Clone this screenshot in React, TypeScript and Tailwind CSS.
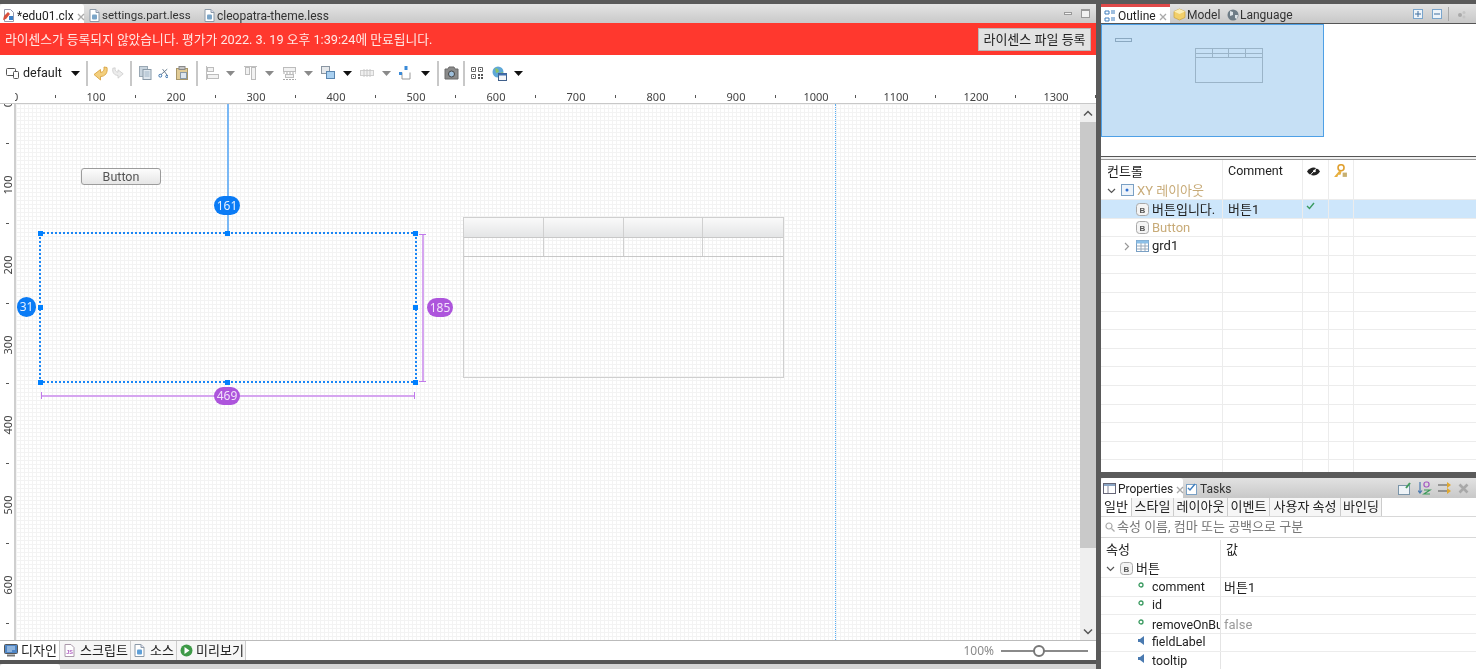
import React from "react";

const Caret = ({ dark = false }: { dark?: boolean }) => (
  <svg width="9" height="5" viewBox="0 0 9 5" className="shrink-0">
    <path d="M0 0h9L4.500 5z" fill={dark ? "#111" : "#8a8a8a"} />
  </svg>
);

const Sep = () => <div className="h-[25px] w-[2px] shrink-0 bg-[#c8c8c8]" />;

const Tb = ({ w, children }: { w: number; children?: React.ReactNode }) => (
  <div className="flex h-[20px] shrink-0 items-center justify-center" style={{ width: w }}>
    {children}
  </div>
);

const FileIcon = ({ c = "#7aa5c8" }: { c?: string }) => (
  <svg width="11" height="13" viewBox="0 0 11 13" className="shrink-0">
    <path d="M1 .5h6l3 3v9H1z" fill="#fff" stroke="#8c9aa8" />
    <path d="M7 .5v3h3" fill="#dde" stroke="#8c9aa8" />
    <rect x="3" y="5.500" width="5" height="5" fill={c} rx="1" />
  </svg>
);

const BIcon = () => (
  <svg width="13" height="13" viewBox="0 0 13 13" className="shrink-0">
    <rect x=".5" y=".5" width="12" height="12" rx="3" fill="#f4f4f4" stroke="#a8a8a8" />
    <text x="6.500" y="9.500" textAnchor="middle" fontSize="8" fontWeight="700" fill="#555" fontFamily="Liberation Sans">B</text>
  </svg>
);

const Close = () => (
  <svg width="8" height="8" viewBox="0 0 8 8" className="shrink-0">
    <path d="M1 1l6 6M7 1L1 7" stroke="#a9a9a9" strokeWidth="1.300" />
  </svg>
);

const Chevron = ({ right = false }: { right?: boolean }) => (
  <svg width="9" height="9" viewBox="0 0 9 9" className="shrink-0">
    <path d={right ? "M3 1l3.500 3.500L3 8" : "M1 3l3.500 3.500L8 3"} fill="none" stroke={right ? "#999" : "#555"} strokeWidth="1.200" />
  </svg>
);

const Handle = ({ x, y }: { x: number; y: number }) => (
  <div className="absolute h-[5px] w-[5px] bg-[#0080ff]" style={{ left: x - 2, top: y - 2 }} />
);

const Toolbar = () => (
  <div className="flex h-[33px] shrink-0 items-center bg-white pl-[6px] pt-[3px] text-[12px] text-[#222]">
    <Tb w={13}>
      <svg width="13" height="12" viewBox="0 0 13 12">
        <rect x=".5" y="1.500" width="9" height="7" rx="1" fill="none" stroke="#555" />
        <rect x="7.500" y="4.500" width="5" height="7" rx="1" fill="#fff" stroke="#555" />
      </svg>
    </Tb>
    <span className="ml-[4px] mt-[1px] w-[48px] text-[12.5px]">default</span>
    <Caret dark />
    <div className="w-[6px]" />
    <Sep />
    <Tb w={24}>
      <svg width="15" height="15" viewBox="0 0 15 15">
        <path d="M14 1.500L11 1c.5 3-.5 5-3.500 5.500V3.500L1 8.500l6.500 5.500v-3.500C12 10.500 15 7 14 1.500z" fill="#f3cf7e" stroke="#d9a440" strokeWidth=".9" strokeLinejoin="round" />
      </svg>
    </Tb>
    <Tb w={12}>
      <svg width="14" height="14" viewBox="0 0 15 15">
        <path d="M1 1.500L4 1c-.5 3 .5 5 3.500 5.500V3.500L14 8.500 7.500 14v-3.500C3 10.500 0 7 1 1.500z" fill="#ececec" stroke="#c8c8c8" strokeWidth=".9" strokeLinejoin="round" />
      </svg>
    </Tb>
    <div className="w-[6px]" />
    <Sep />
    <Tb w={26}>
      <svg width="13" height="14" viewBox="0 0 13 14">
        <rect x=".5" y=".5" width="8" height="10" fill="#c8d4de" stroke="#9aa8b4" />
        <rect x="4" y="3.500" width="8" height="10" fill="#dfe7ee" stroke="#8a9aa8" />
        <path d="M5.500 6h5M5.500 8h5M5.500 10h5" stroke="#9fb4c6" />
      </svg>
    </Tb>
    <Tb w={10}>
      <svg width="13" height="14" viewBox="0 0 13 14">
        <path d="M12 2L4 9M6 2l6 8" stroke="#5f7488" strokeWidth="1.200" />
        <circle cx="3" cy="10.500" r="1.900" fill="none" stroke="#2f6aa8" strokeWidth="1.200" />
        <circle cx="11.500" cy="11.500" r="1.500" fill="none" stroke="#2f6aa8" strokeWidth="1.200" />
      </svg>
    </Tb>
    <Tb w={28}>
      <svg width="12" height="14" viewBox="0 0 12 14">
        <rect x=".5" y="2.500" width="11" height="11" fill="#e2cc96" stroke="#a8976a" />
        <rect x="3" y=".5" width="6" height="3" fill="#c4c4c4" stroke="#8a8a8a" />
        <rect x="4.500" y="6.500" width="6" height="6" fill="#dde6ee" stroke="#8a9aa8" />
      </svg>
    </Tb>
    <Sep />
    <Tb w={28}>
      <svg width="13" height="14" viewBox="0 0 13 14">
        <path d="M.5 0v14" stroke="#c0c0c0" />
        <rect x="1.500" y="1.500" width="6" height="4" fill="#f2f2f2" stroke="#bcbcbc" />
        <rect x="1.500" y="8.500" width="11" height="4" fill="#f2f2f2" stroke="#bcbcbc" />
      </svg>
    </Tb>
    <Caret />
    <Tb w={30}>
      <svg width="13" height="14" viewBox="0 0 13 14">
        <path d="M0 .5h13" stroke="#c0c0c0" />
        <rect x="1.500" y="1.500" width="4" height="7" fill="#f2f2f2" stroke="#bcbcbc" />
        <rect x="7.500" y="1.500" width="4" height="12" fill="#f2f2f2" stroke="#bcbcbc" />
      </svg>
    </Tb>
    <Caret />
    <Tb w={30}>
      <svg width="13" height="14" viewBox="0 0 13 14">
        <rect x=".5" y="1.500" width="12" height="4" fill="#f2f2f2" stroke="#bcbcbc" />
        <rect x="2.500" y="8.500" width="8" height="3" fill="#f2f2f2" stroke="#bcbcbc" />
        <path d="M0 7h13M0 13.500h13" stroke="#a8a8a8" strokeDasharray="2 1" />
      </svg>
    </Tb>
    <Caret />
    <Tb w={30}>
      <svg width="14" height="14" viewBox="0 0 14 14">
        <rect x=".5" y=".5" width="8" height="7" fill="#e6e9ec" stroke="#8a96a2" />
        <rect x="5.500" y="5.500" width="8" height="7" fill="#a9d0f0" stroke="#5a86b0" />
      </svg>
    </Tb>
    <Caret dark />
    <Tb w={30}>
      <svg width="14" height="10" viewBox="0 0 14 10">
        <rect x=".5" y="2.500" width="13" height="5" fill="#f0f0f0" stroke="#cfcfcf" />
        <path d="M4 1v8M7 1v8M10 1v8" stroke="#c8c8c8" />
      </svg>
    </Tb>
    <Caret />
    <Tb w={30}>
      <svg width="14" height="14" viewBox="0 0 14 14">
        <rect x="5.500" y="0" width="3" height="4" fill="#3a8ad8" />
        <path d="M3 6.500v6.500h8V6.500" fill="none" stroke="#9a9a9a" />
        <rect x="0" y="6" width="3" height="3" fill="#3a8ad8" />
      </svg>
    </Tb>
    <Caret dark />
    <div className="w-[7px]" />
    <Sep />
    <Tb w={24}>
      <svg width="15" height="14" viewBox="0 0 15 14">
        <path d="M1 3h3l1-2h5l1 2h3v10H1z" fill="#8a8a8a" stroke="#6a6a6a" />
        <circle cx="7.500" cy="8" r="3" fill="#9fc0dc" stroke="#444" />
      </svg>
    </Tb>
    <Sep />
    <Tb w={24}>
      <svg width="12" height="12" viewBox="0 0 12 12">
        <path d="M.5.5h4v4h-4zM7.500.5h4v4h-4zM.5 7.500h4v4h-4z" fill="none" stroke="#666" />
        <path d="M2 2h1v1H2zM9 2h1v1H9zM2 9h1v1H2zM7 7h2v2H7zM10 7h2v2h-2zM7 10h2v2H7zM10 10h2v2h-2z" fill="#555" />
      </svg>
    </Tb>
    <Tb w={20}>
      <svg width="15" height="15" viewBox="0 0 15 15">
        <circle cx="6" cy="6" r="5.500" fill="#5fa8d8" />
        <path d="M3 2l3 1 1 3-3 1zM8 7l3-1 0 3z" fill="#8cc26a" />
        <rect x="6.500" y="7.500" width="8" height="7" fill="#f4f6f8" stroke="#3f5f8a" />
        <rect x="6.500" y="7.500" width="8" height="2" fill="#3f6fb0" />
      </svg>
    </Tb>
    <div className="w-[5px]" />
    <Caret dark />
  </div>
);

const HRuler = () => (
  <div className="relative h-[16px] shrink-0 overflow-hidden border-b border-[#c8c8c8] bg-white font-['Noto_Sans',sans-serif] text-[11px] leading-[15px] text-[#444]">
    <div className="absolute left-[15px] top-[1px] h-[15px] w-[4px] overflow-hidden">
      <span className="absolute left-[-3px]">0</span>
    </div>
    {[100, 200, 300, 400, 500, 600, 700, 800, 900, 1000, 1100, 1200, 1300].map((v, i) => (
      <span key={v} className="absolute top-[1px] w-[40px] text-center" style={{ left: 76 + i * 80 }}>
        {v}
      </span>
    ))}
    {Array.from({ length: 14 }).map((_, i) => (
      <div key={i} className="absolute top-[7px] h-[3px] w-[1px] bg-[#555]" style={{ left: 55 + i * 80 }} />
    ))}
  </div>
);

const VRuler = () => (
  <div className="relative w-[16px] shrink-0 overflow-hidden border-r-[2px] border-[#cfcfcf] bg-white font-['Noto_Sans',sans-serif] text-[11px] text-[#444]">
    {[0, 100, 200, 300, 400, 500, 600].map((v, i) => (
      <span
        key={v}
        className="absolute left-[-12px] w-[40px] -rotate-90 text-center leading-[14px]"
        style={{ top: i === 0 ? -7 : i * 80 - 6 }}
      >
        {v}
      </span>
    ))}
    {Array.from({ length: 7 }).map((_, i) => (
      <div key={i} className="absolute left-[6px] h-[1px] w-[3px] bg-[#555]" style={{ top: 39 + i * 80 }} />
    ))}
  </div>
);

const Badge = "font-['Noto_Sans',sans-serif]";

const Canvas = () => (
  <div className="relative flex-1 overflow-hidden bg-white bg-[linear-gradient(#f3f3f3_1px,transparent_1px),linear-gradient(90deg,#f3f3f3_1px,transparent_1px)] bg-[size:4px_4px] text-[#444]">
    {/* origin of this box is x=16, y=104 */}
    <div className="absolute left-[65px] top-[64px] flex h-[17px] w-[80px] items-center justify-center rounded-[3px] border border-[#9c9c9c] bg-[linear-gradient(#fcfcfc,#e6e6e6)] pt-[1px] text-[12.5px] text-[#555]">
      Button
    </div>

    <div className="absolute left-[211px] top-0 h-[129px] w-[2px] bg-[#7ab8f5]" />
    <div className={`${Badge} absolute left-[198px] top-[92px] flex h-[19px] w-[26px] items-center justify-center rounded-full bg-[#0a7bf5] text-[12px] text-[#e6f0ff]`}>161</div>

    <div className="absolute left-[23px] top-[128px] h-[151px] w-[378px] border-2 border-dotted border-[#1a86f5]" />
    <Handle x={24} y={129} />
    <Handle x={211} y={129} />
    <Handle x={399} y={203} />
    <Handle x={24} y={203} />
    <Handle x={399} y={129} />
    <Handle x={24} y={278} />
    <Handle x={211} y={278} />
    <Handle x={399} y={278} />

    <div className={`${Badge} absolute left-[1px] top-[193px] flex h-[20px] w-[19px] items-center justify-center rounded-full bg-[#0a7bf5] text-[12px] text-[#e6f0ff]`}>31</div>

    <div className="absolute left-[406px] top-[131px] h-[147px] w-[2px] bg-[#d6a6f0]" />
    <div className="absolute left-[403px] top-[130px] h-[1px] w-[7px] bg-[#c07aea]" />
    <div className="absolute left-[403px] top-[277px] h-[1px] w-[7px] bg-[#c07aea]" />
    <div className={`${Badge} absolute left-[411px] top-[194px] flex h-[19px] w-[26px] items-center justify-center rounded-full bg-[#ad55dc] text-[12px] text-[#f2e2fa]`}>185</div>

    <div className="absolute left-[25px] top-[291px] h-[2px] w-[374px] bg-[#d6a6f0]" />
    <div className="absolute left-[25px] top-[288px] h-[7px] w-[1px] bg-[#c07aea]" />
    <div className="absolute left-[398px] top-[288px] h-[7px] w-[1px] bg-[#c07aea]" />
    <div className={`${Badge} absolute left-[198px] top-[283px] flex h-[18px] w-[26px] items-center justify-center rounded-full bg-[#ad55dc] text-[12px] text-[#f2e2fa]`}>469</div>

    <div className="absolute left-[447px] top-[113px] flex h-[161px] w-[321px] flex-col border border-[#cfcfcf]">
      <div className="grid h-[20px] grid-cols-4 border-b border-[#c8c8c8] bg-[linear-gradient(#fafafa,#e4e5e6)]">
        <div className="border-r border-[#d0d0d0]" />
        <div className="border-r border-[#d0d0d0]" />
        <div className="border-r border-[#d0d0d0]" />
        <div />
      </div>
      <div className="grid h-[19px] grid-cols-4 border-b border-[#c8c8c8]">
        <div className="border-r border-[#d0d0d0]" />
        <div className="border-r border-[#d0d0d0]" />
        <div className="border-r border-[#d0d0d0]" />
        <div />
      </div>
    </div>

    <div className="absolute left-[819px] top-0 h-full w-0 border-l border-dotted border-[#5aaef5]" />
  </div>
);

const Scrollbar = () => (
  <div className="flex w-[16px] shrink-0 flex-col items-center bg-[#efefef]">
    <div className="flex h-[18px] items-center">
      <svg width="10" height="7" viewBox="0 0 10 7"><path d="M1 5.500l4-4 4 4" fill="none" stroke="#555" strokeWidth="1.500" /></svg>
    </div>
    <div className="h-[426px] w-full bg-[#c9c9c9]" />
    <div className="flex-1" />
    <div className="flex h-[18px] items-center">
      <svg width="10" height="7" viewBox="0 0 10 7"><path d="M1 1.500l4 4 4-4" fill="none" stroke="#555" strokeWidth="1.500" /></svg>
    </div>
  </div>
);

const Editor = () => (
  <div className="flex w-[1096px] shrink-0 flex-col">
    <div className="flex h-[19px] shrink-0 items-end bg-[linear-gradient(#e4e4e4,#c9c9c9)] text-[12px] text-[#333]">
      <div className="flex h-[19px] w-[84px] items-center gap-[2px] rounded-t-[3px] bg-white pl-[3px] pt-[4px]">
        <svg width="12" height="13" viewBox="0 0 12 13" className="shrink-0">
          <path d="M1.500.5h6l3 3v9h-9z" fill="#fff" stroke="#99a" />
          <path d="M1 7l4-4 2 2-4 5-3 1z" fill="#d8503c" />
          <rect x="6" y="7" width="4" height="4" fill="#3a7fc8" />
        </svg>
        <span className="text-[#222]">*edu01.clx</span>
        <div className="ml-[1px] mt-[3px]"><Close /></div>
      </div>
      <div className="flex h-[19px] w-[120px] items-center gap-[2px] pl-[5px] pt-[4px]">
        <FileIcon />
        <span className="text-[11.5px]">settings.part.less</span>
      </div>
      <div className="flex h-[19px] items-center gap-[2px] pt-[4px]">
        <FileIcon />
        <span>cleopatra-theme.less</span>
      </div>
      <div className="flex-1" />
      <div className="flex h-[19px] items-center gap-[9px] pr-[6px]">
        <div className="h-[3px] w-[8px] border border-[#999] bg-[#f2f2f2]" />
        <div className="h-[9px] w-[9px] border border-[#999] border-t-2 bg-[#f2f2f2]" />
      </div>
    </div>

    <div className="flex h-[32px] shrink-0 items-center justify-between bg-[#ff382e] pl-[5px] pr-[5px] pt-[1px] text-[12.75px] text-[#ffe9e6]">
      <span>라이센스가 등록되지 않았습니다. 평가가 2022. 3. 19 오후 1:39:24에 만료됩니다.</span>
      <div className="flex h-[23px] w-[113px] items-center justify-center border border-[#b8b8b8] bg-[#e2e2e2] text-[13px] text-[#222]">라이센스 파일 등록</div>
    </div>

    <Toolbar />
    <HRuler />

    <div className="flex min-h-0 flex-1">
      <VRuler />
      <Canvas />
      <Scrollbar />
    </div>

    <div className="flex h-[20px] shrink-0 items-center border-t border-[#bbb] bg-white text-[13px] text-[#222]">
      <div className="flex h-full w-[59px] items-center gap-[3px] pl-[4px]">
        <svg width="14" height="13" viewBox="0 0 14 13" className="shrink-0">
          <rect x=".5" y=".5" width="13" height="9" rx="1" fill="#4f86c6" stroke="#555" />
          <path d="M3 3h8M3 5h8M3 7h5" stroke="#cfe2f5" />
          <rect x="3" y="10.500" width="8" height="2" fill="#777" />
        </svg>
        <span>디자인</span>
      </div>
      <div className="flex h-full w-[71px] items-center gap-[5px] border-l border-[#ccc] bg-[#f6f6f6] pl-[4px]">
        <svg width="11" height="13" viewBox="0 0 11 13" className="shrink-0">
          <path d="M1 .5h6l3 3v9H1z" fill="#fff" stroke="#a9a" />
          <text x="5.500" y="10" textAnchor="middle" fontSize="5.500" fontWeight="700" fill="#b060c0" fontFamily="Liberation Sans">JS</text>
        </svg>
        <span>스크립트</span>
      </div>
      <div className="flex h-full w-[46px] items-center gap-[5px] border-l border-[#ccc] bg-[#f6f6f6] pl-[3px]">
        <FileIcon c="#5fa0d8" />
        <span>소스</span>
      </div>
      <div className="flex h-full w-[70px] items-center gap-[3px] border-x border-[#ccc] bg-[#f6f6f6] pl-[3px]">
        <svg width="13" height="13" viewBox="0 0 13 13" className="shrink-0">
          <circle cx="6.500" cy="6.500" r="6" fill="#3e9a48" />
          <path d="M4.500 3l5 3.500-5 3.500z" fill="#fff" />
        </svg>
        <span>미리보기</span>
      </div>
      <div className="flex-1" />
      <span className="mr-[7px] font-['Noto_Sans',sans-serif] text-[12px] text-[#8a8a8a]">100%</span>
      <div className="relative mr-[8px] h-[2px] w-[87px] bg-[#8a8a8a]">
        <div className="absolute left-[32px] top-[-5px] h-[12px] w-[12px] rounded-full border-2 border-[#777] bg-white" />
      </div>
    </div>

    <div className="h-[4px] shrink-0 bg-[#555]" />
    <div className="flex h-[5px] shrink-0 bg-[#d4d4d4]">
      <div className="w-[60px] rounded-t-[3px] bg-white" />
    </div>
  </div>
);

const TreeRow = ({
  sel,
  indent,
  icon,
  label,
  labelClass,
  comment,
  check,
}: {
  sel?: boolean;
  indent?: React.ReactNode;
  icon?: React.ReactNode;
  label?: string;
  labelClass?: string;
  comment?: string;
  check?: boolean;
}) => (
  <div className={`grid h-[18.6px] shrink-0 grid-cols-[122px_80px_26px_25px_1fr] border-b border-[#ececec] ${sel ? "bg-[#cde6fb]" : ""}`}>
    <div className="flex items-center gap-[3px] overflow-hidden whitespace-nowrap border-r border-[#ececec]">
      {indent}
      {icon}
      <span className={labelClass ?? "text-[#222]"}>{label}</span>
    </div>
    <div className="flex items-center border-r border-[#ececec] pl-[5px] text-[#222]">{comment}</div>
    <div className="flex items-start justify-center border-r border-[#ececec] pr-[10px] pt-[2px]">
      {check && (
        <svg width="9" height="8" viewBox="0 0 9 8"><path d="M1 4l2.500 2.500L8 1" fill="none" stroke="#3a9a60" strokeWidth="1.400" /></svg>
      )}
    </div>
    <div className="border-r border-[#ececec]" />
    <div />
  </div>
);

const Outline = () => (
  <div className="flex h-[468px] shrink-0 flex-col bg-white">
    <div className="flex h-[20px] shrink-0 items-stretch border-b border-[#555] bg-[linear-gradient(#e2e2e2,#c8c8c8)] text-[12px] text-[#333]">
      <div className="flex w-[69px] items-center gap-[2px] border-t-[3px] border-[#e04a4a] bg-white pl-[3px] pt-[1px]">
        <svg width="12" height="12" viewBox="0 0 12 12" className="shrink-0">
          <path d="M1 1h4v3H1zM1 8h4v3H1zM7 1h4M7 3h4M7 8h4M7 10h4" fill="none" stroke="#3f7fbf" />
        </svg>
        <span className="text-[#222]">Outline</span>
        <div className="ml-[1px] mt-[3px]"><Close /></div>
      </div>
      <div className="flex w-[57px] items-center gap-[1px] pl-[3px] pt-[2px]">
        <svg width="13" height="13" viewBox="0 0 13 13" className="shrink-0">
          <path d="M6.500 1l5.500 2.500v6L6.500 12 1 9.500v-6z" fill="#f2cf6a" stroke="#c8a13c" strokeWidth=".7" />
          <path d="M1 3.500L6.500 6l5.500-2.500L6.500 1z" fill="#fbeeb8" />
        </svg>
        <span>Model</span>
      </div>
      <div className="flex items-center gap-[1px] pt-[2px]">
        <svg width="12" height="12" viewBox="0 0 12 12" className="shrink-0">
          <circle cx="6" cy="6" r="5.500" fill="#6e7c86" />
          <path d="M3 2l3 1v3L3 7zM8 6l3 0-1 4-2-1z" fill="#dde3e7" />
        </svg>
        <span>Language</span>
      </div>
      <div className="flex-1" />
      <div className="flex items-center gap-[8px] pr-[9px]">
        <svg width="10" height="10" viewBox="0 0 10 10"><rect x=".5" y=".5" width="9" height="9" fill="#eef4fa" stroke="#7aa5cc" /><path d="M2 5h6M5 2v6" stroke="#3f6f9f" /></svg>
        <svg width="10" height="10" viewBox="0 0 10 10" className="ml-[1px]"><rect x=".5" y=".5" width="9" height="9" fill="#eef4fa" stroke="#7aa5cc" /><path d="M2 5h6" stroke="#3f6f9f" /></svg>
        <div className="-ml-[2px] h-[14px] w-[1px] bg-[#a8a8a8]" />
        <svg width="10" height="10" viewBox="0 0 10 10"><circle cx="3" cy="6" r="2" fill="#a9a9a9" /><circle cx="7" cy="3.500" r="1.500" fill="#c4c4c4" /><circle cx="7" cy="8" r="1.500" fill="#c4c4c4" /></svg>
      </div>
    </div>

    <div className="relative h-[133px] shrink-0 border-b border-[#555]">
      <div className="relative h-[113px] w-[223px] border border-[#4ea0e6] bg-[#c6e0f5]">
        <div className="absolute left-[13px] top-[13px] h-[4px] w-[17px] border border-[#8aa8c0]" />
        <div className="absolute left-[93px] top-[23px] flex h-[35px] w-[68px] flex-col border border-[#9ab4c8]">
          <div className="grid h-[5px] grid-cols-4 border-b border-[#9ab4c8]">
            <div className="border-r border-[#9ab4c8]" />
            <div className="border-r border-[#9ab4c8]" />
            <div className="border-r border-[#9ab4c8]" />
            <div />
          </div>
          <div className="grid h-[4px] grid-cols-4 border-b border-[#9ab4c8]">
            <div className="border-r border-[#9ab4c8]" />
            <div className="border-r border-[#9ab4c8]" />
            <div className="border-r border-[#9ab4c8]" />
            <div />
          </div>
        </div>
      </div>
    </div>

    <div className="h-[2px] shrink-0 bg-[#f0f0f0]" />
    <div className="h-[1px] shrink-0 bg-[#999]" />

    <div className="flex min-h-0 flex-1 flex-col overflow-hidden text-[13px]">
      <div className="grid h-[21.5px] shrink-0 grid-cols-[122px_80px_26px_25px_1fr] text-[#222]">
        <div className="flex items-center border-r border-[#ececec] pl-[6px] pt-[2px]">컨트롤</div>
        <div className="flex items-center border-r border-[#ececec] pl-[5px] pt-[2px] text-[12.5px]">Comment</div>
        <div className="flex items-center border-r border-[#ececec] pl-[3px] pt-[2px]">
          <svg width="15" height="11" viewBox="0 0 15 11"><path d="M1 5.500C3 2.500 5.500 1.500 7.500 1.500s4.500 1 6.500 4c-2 3-4.500 4-6.500 4S3 8.500 1 5.500z" fill="#222" /><circle cx="8.500" cy="5" r="1.300" fill="#fff" /><path d="M3 10.500L12 .5" stroke="#fff" strokeWidth="1" /></svg>
        </div>
        <div className="flex items-center border-r border-[#ececec] pl-[4px] pt-[1px]">
          <svg width="15" height="14" viewBox="0 0 14 13"><circle cx="7.500" cy="3.500" r="2.800" fill="none" stroke="#e0a030" strokeWidth="1.500" /><path d="M6 6L1 12h3l1-2h2l1-3" fill="#e8b040" /><rect x="9" y="8" width="4" height="4" fill="#c8b070" /></svg>
        </div>
        <div />
      </div>
      <TreeRow
        indent={<div className="ml-[6px] mr-[2px]"><Chevron /></div>}
        icon={
          <svg width="13" height="12" viewBox="0 0 13 12" className="shrink-0">
            <rect x=".5" y=".5" width="12" height="11" fill="#eef4fa" stroke="#7aa0c4" />
            <circle cx="6" cy="6" r="1.500" fill="#2f6fd0" />
          </svg>
        }
        label="XY 레이아웃"
        labelClass="text-[#c8ab78]"
      />
      <TreeRow sel indent={<div className="w-[32px]" />} icon={<BIcon />} label="버튼입니다." comment="버튼1" check />
      <TreeRow indent={<div className="w-[32px]" />} icon={<BIcon />} label="Button" labelClass="text-[#c8ab78]" />
      <TreeRow
        indent={<div className="ml-[21px] mr-[2px]"><Chevron right /></div>}
        icon={
          <svg width="13" height="12" viewBox="0 0 13 12" className="shrink-0">
            <rect x=".5" y=".5" width="12" height="11" fill="#fff" stroke="#7aa0c4" />
            <rect x=".5" y=".5" width="12" height="3" fill="#8cc0e8" />
            <path d="M1 6h11M1 9h11M5 3v8M9 3v8" stroke="#9ab" />
          </svg>
        }
        label="grd1"
      />
      {Array.from({ length: 12 }).map((_, i) => (
        <TreeRow key={i} />
      ))}
    </div>
  </div>
);

const PropRow = ({
  icon,
  label,
  value,
  valueClass,
}: {
  icon: "dot" | "tag";
  label: string;
  value?: string;
  valueClass?: string;
}) => (
  <div className="grid h-[18.6px] shrink-0 grid-cols-[120px_1fr] border-b border-[#ececec]">
    <div className="flex items-center overflow-hidden whitespace-nowrap border-r border-[#e4e4e4] pl-[37px] text-[12.4px] text-[#222]">
      <div className="mb-[5px] mr-[6px] w-[8px] shrink-0">
        {icon === "dot" ? (
          <svg width="6" height="6" viewBox="0 0 6 6"><circle cx="3" cy="3" r="2" fill="#fff" stroke="#3a9a60" strokeWidth="1.300" /></svg>
        ) : (
          <svg width="7" height="9" viewBox="0 0 7 9"><path d="M6 0v9L2 6H0V3h2z" fill="#4a7ab0" /></svg>
        )}
      </div>
      <span>{label}</span>
    </div>
    <div className={`flex items-center pl-[3px] ${valueClass ?? "text-[#222]"}`}>{value}</div>
  </div>
);

const Properties = () => (
  <div className="flex min-h-0 flex-1 flex-col overflow-hidden bg-white text-[13px]">
    <div className="flex h-[20px] shrink-0 items-stretch bg-[linear-gradient(#e2e2e2,#c8c8c8)] text-[12px] text-[#333]">
      <div className="flex w-[82px] items-center gap-[2px] rounded-t-[3px] bg-white pl-[2px] pt-[1px]">
        <svg width="13" height="11" viewBox="0 0 13 11" className="shrink-0">
          <rect x=".5" y=".5" width="12" height="10" fill="#fff" stroke="#667" />
          <rect x="1" y="1" width="11" height="2" fill="#8aa5c4" />
          <path d="M5 3v7" stroke="#889" />
        </svg>
        <span className="text-[#222]">Properties</span>
        <div className="ml-[1px] mt-[3px]"><Close /></div>
      </div>
      <div className="flex items-center gap-[2px] pl-[2px] pt-[1px]">
        <svg width="13" height="13" viewBox="0 0 13 13" className="shrink-0">
          <rect x="1.500" y="2.500" width="10" height="10" fill="#fff" stroke="#7aa0c4" />
          <path d="M3 6l2 2 5-6" fill="none" stroke="#3f7fbf" strokeWidth="1.400" />
        </svg>
        <span>Tasks</span>
      </div>
      <div className="flex-1" />
      <div className="flex items-center gap-[6px] pr-[7px]">
        <svg width="14" height="13" viewBox="0 0 14 13"><rect x=".5" y="3.500" width="11" height="9" fill="#eef3f7" stroke="#7a94a8" /><path d="M8 6l4-5" stroke="#3f9a5a" strokeWidth="2" /></svg>
        <svg width="14" height="14" viewBox="0 0 14 14"><path d="M2 1v11M0 9.500L2 12l2-2.500" fill="none" stroke="#4a7ab0" strokeWidth="1.200" /><rect x="6" y="1" width="5" height="5" rx="2" fill="none" stroke="#a050c0" strokeWidth="1.200" /><path d="M6 9h6l-6 4h6" fill="none" stroke="#3f9a5a" strokeWidth="1.200" /></svg>
        <svg width="14" height="12" viewBox="0 0 14 12"><path d="M0 3h9M0 9h9" stroke="#555" strokeWidth="1.200" /><path d="M9 0l4 3-4 3zM9 6l4 3-4 3z" fill="#e0a830" /></svg>
        <svg width="11" height="11" viewBox="0 0 11 11"><path d="M1.500 1.500l8 8M9.500 1.500l-8 8" stroke="#a8a8a8" strokeWidth="2.600" /></svg>
      </div>
    </div>
    <div className="flex h-[19px] shrink-0 border-b border-[#d8d8d8] text-[#222]">
      <div className="flex w-[30px] items-center justify-center">일반</div>
      <div className="flex w-[43px] items-center justify-center border-x border-[#ccc] bg-[#f6f6f6]">스타일</div>
      <div className="flex w-[54px] items-center justify-center border-r border-[#ccc] bg-[#f6f6f6]">레이아웃</div>
      <div className="flex w-[42px] items-center justify-center border-r border-[#ccc] bg-[#f6f6f6]">이벤트</div>
      <div className="flex w-[71px] items-center justify-center border-r border-[#ccc] bg-[#f6f6f6]">사용자 속성</div>
      <div className="flex w-[41px] items-center justify-center border-r border-[#ccc] bg-[#f6f6f6]">바인딩</div>
    </div>
    <div className="flex h-[21px] shrink-0 items-center gap-[2px] border-b border-[#d8d8d8] pl-[4px] text-[#777]">
      <svg width="10" height="10" viewBox="0 0 10 10" className="shrink-0"><circle cx="4" cy="4" r="3" fill="none" stroke="#aaa" strokeWidth="1.200" /><path d="M6.500 6.500L9.500 9.500" stroke="#aaa" strokeWidth="1.200" /></svg>
      <span>속성 이름, 컴마 또는 공백으로 구분</span>
    </div>
    <div className="grid h-[21px] shrink-0 grid-cols-[120px_1fr] pt-[2px] text-[#222]">
      <div className="flex items-center border-r border-[#e4e4e4] pl-[5px]">속성</div>
      <div className="flex items-center pl-[5px]">값</div>
    </div>
    <div className="grid h-[19px] shrink-0 grid-cols-[120px_1fr] border-b border-[#ececec] text-[#222]">
      <div className="flex items-center gap-[5px] border-r border-[#e4e4e4] pl-[5px]">
        <Chevron />
        <BIcon />
        <span className="-ml-[2px]">버튼</span>
      </div>
      <div />
    </div>
    <PropRow icon="dot" label="comment" value="버튼1" />
    <PropRow icon="dot" label="id" />
    <PropRow icon="dot" label="removeOnBu" value="false" valueClass="text-[#9a9a9a]" />
    <PropRow icon="tag" label="fieldLabel" />
    <PropRow icon="tag" label="tooltip" />
  </div>
);

export default function App() {
  return (
    <div className="flex h-[669px] w-[1476px] flex-col overflow-hidden bg-[#5a5a5a] pt-[4px] font-['Roboto','Noto_Sans_CJK_KR',sans-serif] blur-[0.3px]">
      <div className="flex min-h-0 flex-1">
        <Editor />
        <div className="w-[5px] shrink-0" />
        <div className="flex min-w-0 flex-1 flex-col">
          <Outline />
          <div className="h-[6px] shrink-0" />
          <Properties />
        </div>
      </div>
    </div>
  );
}
